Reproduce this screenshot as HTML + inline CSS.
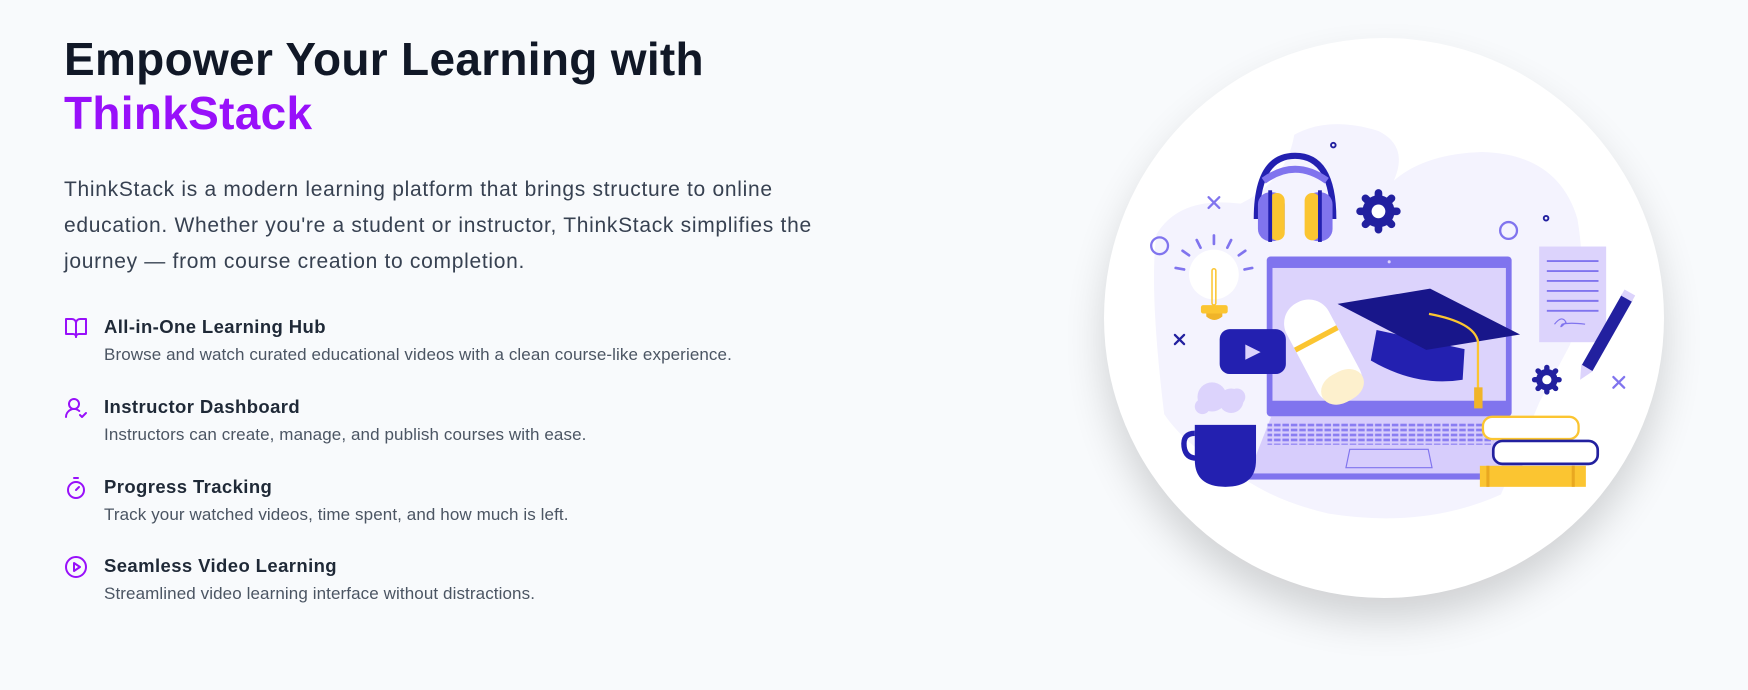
<!DOCTYPE html>
<html><head><meta charset="utf-8"><style>
html,body{margin:0;padding:0}
body{width:1748px;height:690px;background:#f8fafc;position:relative;overflow:hidden;font-family:"Liberation Sans",sans-serif}
.h{position:absolute;left:64px;top:32px;font-size:46px;line-height:54px;font-weight:bold;color:#111827;margin:0;letter-spacing:0.3px}
.h span{color:#9810fa}
.p{position:absolute;left:64px;top:172px;width:900px;font-size:21px;line-height:36px;color:#374151;margin:0;letter-spacing:0.7px}
.f{position:absolute;left:64px;width:800px}
.f svg{position:absolute;left:0;top:1px}
.f .t{position:absolute;left:40px;top:0;font-size:18.5px;line-height:24px;font-weight:bold;color:#1f2937;white-space:nowrap;letter-spacing:0.4px}
.f .d{position:absolute;left:40px;top:28px;font-size:17px;line-height:24px;color:#4b5563;white-space:nowrap;letter-spacing:0.1px}
.circ{position:absolute;left:1104px;top:38px;width:560px;height:560px;border-radius:50%;background:#fff;box-shadow:0 22px 40px rgba(0,0,0,0.16)}
.ill{position:absolute;left:1080px;top:20px;width:600px;height:600px}
</style></head><body>
<h1 class="h">Empower Your Learning with<br><span>ThinkStack</span></h1>
<p class="p">ThinkStack is a modern learning platform that brings structure to online<br>education. Whether you're a student or instructor, ThinkStack simplifies the<br>journey — from course creation to completion.</p>

<div class="f" style="top:315px">
<svg width="24" height="24" viewBox="0 0 24 24" fill="none" stroke="#9810fa" stroke-width="2" stroke-linecap="round" stroke-linejoin="round"><path d="M2 3h6a4 4 0 0 1 4 4v14a3 3 0 0 0-3-3H2z"/><path d="M22 3h-6a4 4 0 0 0-4 4v14a3 3 0 0 1 3-3h7z"/></svg>
<div class="t">All-in-One Learning Hub</div><div class="d">Browse and watch curated educational videos with a clean course-like experience.</div></div>

<div class="f" style="top:395px">
<svg width="24" height="24" viewBox="0 0 24 24" fill="none" stroke="#9810fa" stroke-width="2" stroke-linecap="round" stroke-linejoin="round"><path d="M2 21a8 8 0 0 1 13.3-6"/><circle cx="10" cy="8" r="5"/><path d="m16 19 2 2 4-4"/></svg>
<div class="t">Instructor Dashboard</div><div class="d">Instructors can create, manage, and publish courses with ease.</div></div>

<div class="f" style="top:475px">
<svg width="24" height="24" viewBox="0 0 24 24" fill="none" stroke="#9810fa" stroke-width="2" stroke-linecap="round" stroke-linejoin="round"><line x1="10" x2="14" y1="2" y2="2"/><line x1="12" x2="15" y1="14" y2="11"/><circle cx="12" cy="14" r="8"/></svg>
<div class="t">Progress Tracking</div><div class="d">Track your watched videos, time spent, and how much is left.</div></div>

<div class="f" style="top:554px">
<svg width="24" height="24" viewBox="0 0 24 24" fill="none" stroke="#9810fa" stroke-width="2" stroke-linecap="round" stroke-linejoin="round"><circle cx="12" cy="12" r="10"/><polygon points="10 8 16 12 10 16 10 8"/></svg>
<div class="t">Seamless Video Learning</div><div class="d">Streamlined video learning interface without distractions.</div></div>

<div class="circ"></div>
<svg class="ill" viewBox="0 0 1568 1568">
<defs><pattern id="keys" width="22" height="13" patternUnits="userSpaceOnUse"><rect x="1" y="2" width="17" height="7" fill="#8a7df2"/></pattern></defs>
<g fill="#f4f3fe">
<path d="M560 300 Q650 250 780 290 Q860 330 820 420 Q900 350 1050 345 Q1250 350 1300 520 Q1330 700 1280 850 L1200 1000 L1100 1240 Q900 1330 650 1290 Q520 1260 430 1200 Q280 1120 220 1030 Q180 700 200 560 Q260 460 420 480 Q540 420 560 300Z"/>
</g>
<rect x="488" y="618" width="640" height="418" rx="10" fill="#8074ee"/>
<rect x="503" y="648" width="610" height="347" fill="#dcd3fc"/>
<circle cx="808" cy="632" r="4" fill="#dcd3fc"/>
<polygon points="500,1036 1110,1036 1165,1188 440,1188" fill="#d7cdfc"/>
<rect x="440" y="1185" width="725" height="16" fill="#8074ee"/>
<rect x="490" y="1052" width="590" height="58" fill="url(#keys)"/>
<polygon points="705,1122 910,1122 920,1170 695,1170" fill="none" stroke="#8074ee" stroke-width="3"/>
<g transform="rotate(-28 640 870)"><rect x="575" y="720" width="125" height="290" rx="60" fill="#fff"/><rect x="580" y="930" width="118" height="80" rx="50" fill="#fdf0cd"/><rect x="575" y="820" width="125" height="14" fill="#fbc531"/></g>
<path d="M775 810 L1005 860 L1000 940 Q880 960 760 890Z" fill="#2320b0"/>
<polygon points="673,742 915,702 1150,822 905,862" fill="#18168a"/>
<path d="M912 768 Q1030 790 1040 840 L1040 990" stroke="#fbc531" stroke-width="6" fill="none"/>
<rect x="1030" y="960" width="22" height="55" fill="#f0b429"/>
<rect x="365" y="808" width="173" height="117" rx="26" fill="#2320b0"/>
<polygon points="432,848 472,868 432,888" fill="#dcd3fc"/>
<path d="M462 520 Q462 355 562 355 Q662 355 662 520" fill="none" stroke="#2320b0" stroke-width="16"/>
<path d="M480 420 Q562 360 645 420" fill="none" stroke="#8074ee" stroke-width="18"/>
<rect x="465" y="450" width="70" height="128" rx="32" fill="#8074ee"/><rect x="495" y="452" width="40" height="124" rx="20" fill="#fbc531"/>
<rect x="590" y="450" width="70" height="128" rx="32" fill="#8074ee"/><rect x="587" y="452" width="40" height="124" rx="20" fill="#fbc531"/>
<rect x="492" y="445" width="10" height="135" fill="#2320b0"/><rect x="622" y="445" width="10" height="135" fill="#2320b0"/>
<g fill="#22209f"><circle cx="780" cy="500" r="42"/>
<g stroke="#22209f" stroke-width="20" stroke-linecap="round"><line x1="780" y1="452" x2="780" y2="548"/><line x1="732" y1="500" x2="828" y2="500"/><line x1="746" y1="466" x2="814" y2="534"/><line x1="814" y1="466" x2="746" y2="534"/></g>
<circle cx="1220" cy="940" r="28"/><g stroke="#22209f" stroke-width="14" stroke-linecap="round"><line x1="1220" y1="908" x2="1220" y2="972"/><line x1="1188" y1="940" x2="1252" y2="940"/><line x1="1197" y1="917" x2="1243" y2="963"/><line x1="1243" y1="917" x2="1197" y2="963"/></g></g>
<circle cx="780" cy="500" r="18" fill="#fff"/><circle cx="1220" cy="940" r="12" fill="#fff"/>
<circle cx="350" cy="665" r="65" fill="#fff"/>
<rect x="345" y="650" width="10" height="95" rx="5" fill="none" stroke="#fbc531" stroke-width="4"/>
<rect x="316" y="745" width="70" height="22" rx="6" fill="#fbc531"/><path d="M330 767 h42 v8 q-21 18 -42 0Z" fill="#f0b429"/>
<g stroke="#8074ee" stroke-width="7" stroke-linecap="round"><line x1="350" y1="563" x2="350" y2="585"/><line x1="305" y1="575" x2="315" y2="595"/><line x1="395" y1="575" x2="385" y2="595"/><line x1="268" y1="603" x2="285" y2="615"/><line x1="432" y1="603" x2="415" y2="615"/><line x1="250" y1="648" x2="272" y2="652"/><line x1="450" y1="648" x2="430" y2="652"/></g>
<rect x="1200" y="592" width="175" height="250" fill="#dcd3fc"/>
<g stroke="#8074ee" stroke-width="5"><line x1="1220" y1="630" x2="1355" y2="630"/><line x1="1220" y1="656" x2="1355" y2="656"/><line x1="1220" y1="682" x2="1355" y2="682"/><line x1="1220" y1="708" x2="1355" y2="708"/><line x1="1220" y1="734" x2="1355" y2="734"/><line x1="1220" y1="760" x2="1355" y2="760"/></g>
<path d="M1240 795 q20 -25 30 -5 q-20 20 -10 5 q20 -5 60 0" fill="none" stroke="#8074ee" stroke-width="3"/>
<line x1="1430" y1="725" x2="1325" y2="910" stroke="#22209f" stroke-width="32"/>
<line x1="1437" y1="712" x2="1428" y2="728" stroke="#dcd3fc" stroke-width="32"/>
<polygon points="1310,900 1340,918 1307,940" fill="#dcd3fc"/>
<rect x="1053" y="1037" width="250" height="58" rx="24" fill="#fff" stroke="#fbc531" stroke-width="6"/>
<rect x="1080" y="1100" width="273" height="60" rx="24" fill="#fff" stroke="#22209f" stroke-width="7"/>
<rect x="1045" y="1165" width="277" height="55" fill="#fbc531"/>
<rect x="1062" y="1165" width="8" height="55" fill="#e9a820"/><rect x="1285" y="1165" width="8" height="55" fill="#e9a820"/>
<g fill="#dcd3fc"><circle cx="345" cy="985" r="38"/><circle cx="395" cy="995" r="32"/><circle cx="320" cy="1010" r="20"/><circle cx="410" cy="985" r="22"/></g>
<path d="M300 1058 H460 V1150 Q460 1220 380 1220 Q300 1220 300 1150Z" fill="#2320b0"/>
<path d="M300 1080 Q268 1080 272 1115 Q276 1145 305 1145" fill="none" stroke="#2320b0" stroke-width="14"/>
<g fill="none" stroke="#8074ee" stroke-width="6"><circle cx="208" cy="590" r="22"/><circle cx="1120" cy="550" r="22"/></g>
<g fill="none" stroke="#22209f" stroke-width="5"><circle cx="662" cy="327" r="6"/><circle cx="1218" cy="518" r="6"/></g>
<g stroke-width="6" stroke-linecap="round"><path d="M336 463 L364 491 M364 463 L336 491" stroke="#8074ee"/><path d="M248 823 L272 847 M272 823 L248 847" stroke="#22209f"/><path d="M1394 933 L1422 961 M1422 933 L1394 961" stroke="#8074ee"/></g>
</svg>
</body></html>
